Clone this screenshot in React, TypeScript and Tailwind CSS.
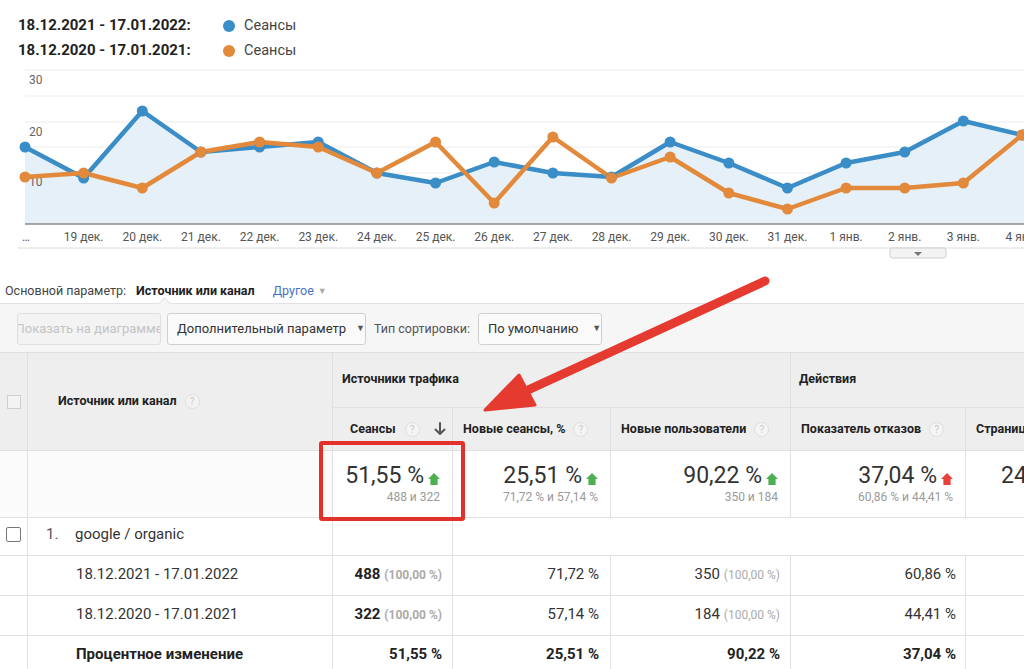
import React from "react";

const blue = [147, 178, 111, 152, 147, 142, 173, 183, 162, 173, 177, 142, 163, 188, 163, 152, 121, 135, 142];
const orange = [177, 173, 188, 152, 142, 147, 173, 142, 203, 137, 178, 157, 193, 209, 188, 188, 183, 135, 120];
const days = [
  "…", "19 дек.", "20 дек.", "21 дек.", "22 дек.", "23 дек.", "24 дек.", "25 дек.", "26 дек.",
  "27 дек.", "28 дек.", "29 дек.", "30 дек.", "31 дек.", "1 янв.", "2 янв.", "3 янв.", "4 янв.",
];

const OFF = 62;
const px = (i: number) => 25 + i * 58.65;
const toPts = (vals: number[]) => vals.map((v, i) => `${px(i)},${v - OFF}`).join(" ");

const Chart = () => {
  const grid = [70, 96, 122, 147, 173, 198];
  const area = `${toPts(blue)} ${px(blue.length - 1)},162 25,162`;
  return (
    <svg width={1024} height={200} className="block">
      {grid.map((g) => (
        <line key={g} x1={25} x2={1024} y1={g - OFF} y2={g - OFF} stroke="#ececec" strokeWidth={1} />
      ))}
      <polygon points={area} fill="#e5f0f8" />
      <line x1={25} x2={1024} y1={162} y2={162} stroke="#8a8a8a" strokeWidth={1.5} />
      <text x={29} y={22} fontSize={12} fill="#666">30</text>
      <text x={29} y={74} fontSize={12} fill="#666">20</text>
      <text x={29} y={124} fontSize={12} fill="#666">10</text>
      <polyline points={toPts(blue)} fill="none" stroke="#3a8dc6" strokeWidth={4.5} strokeLinejoin="round" />
      <polyline points={toPts(orange)} fill="none" stroke="#e2893b" strokeWidth={4.5} strokeLinejoin="round" />
      {blue.map((v, i) => (
        <circle key={"b" + i} cx={px(i)} cy={v - OFF} r={5.5} fill="#3a8dc6" />
      ))}
      {orange.map((v, i) => (
        <circle key={"o" + i} cx={px(i)} cy={v - OFF} r={5.5} fill="#e2893b" />
      ))}
      {days.map((d, i) => (
        <text key={d} x={i === 0 ? 22 : px(i)} y={179} fontSize={12} fill="#555" textAnchor={i === 0 ? "start" : "middle"}>
          {d}
        </text>
      ))}
      <line x1={18} x2={1024} y1={186} y2={186} stroke="#dcdcdc" strokeWidth={1} />
      <rect x={890} y={186} width={56} height={10} rx={2} fill="#f3f3f3" stroke="#cfcfcf" />
      <polygon points="914,190 922,190 918,194" fill="#777" />
    </svg>
  );
};

const Help = () => (
  <span className="inline-flex h-[15px] w-[15px] items-center justify-center rounded-full border border-[#dedede] bg-[#f4f4f4] text-[10px] font-normal text-[#c8c8c8]">
    ?
  </span>
);

const Up = ({ red }: { red?: boolean }) => (
  <svg width={12} height={12} viewBox="0 0 10 10" className="mb-[4px] ml-[4px]">
    <polygon points="5,0 10,5 8,5 8,10 2,10 2,5 0,5" fill={red ? "#e8413a" : "#4caf50"} />
  </svg>
);

const Summary = ({ value, sub, red }: { value: string; sub: string; red?: boolean }) => (
  <div className="flex flex-col items-end pr-[12px] pt-[12px]">
    <div className="flex items-end text-[23px] leading-[26px] text-[#333]">
      {value}
      <Up red={red} />
    </div>
    <div className="text-[12px] leading-[16px] text-[#9a9a9a]">{sub}</div>
  </div>
);

const Cell = ({ children, className = "" }: { children?: React.ReactNode; className?: string }) => (
  <div className={`flex items-center whitespace-nowrap border-b border-[#e0e0e0] ${className}`}>{children}</div>
);

const SortDown = () => (
  <svg width={12} height={14} viewBox="0 0 12 14" className="ml-[14px]">
    <path d="M6 1 V12 M1.5 7.5 L6 12 L10.5 7.5" fill="none" stroke="#555" strokeWidth={2} strokeLinecap="round" strokeLinejoin="round" />
  </svg>
);

export default function App() {
  return (
    <div className="relative h-[669px] w-[1024px] overflow-hidden bg-white font-['Roboto',sans-serif] text-[#333]">
      {/* legend */}
      <div className="h-[62px] pl-[18px] pt-[13px]">
        {[
          ["18.12.2021 - 17.01.2022:", "bg-[#3a8dc6]"],
          ["18.12.2020 - 17.01.2021:", "bg-[#e2893b]"],
        ].map(([d, c]) => (
          <div key={d} className="flex h-[25px] items-center">
            <span className="w-[205px] text-[15px] font-bold text-[#222]">{d}</span>
            <span className={`h-[12px] w-[12px] rounded-full ${c}`} />
            <span className="ml-[9px] text-[14.5px] text-[#444]">Сеансы</span>
          </div>
        ))}
      </div>

      <Chart />

      {/* primary dimension */}
      <div className="flex h-[41px] items-start whitespace-nowrap pl-[5px] pt-[21px] text-[12.5px] leading-[16px]">
        <span className="text-[#444]">Основной параметр:</span>
        <span className="ml-[10px] font-bold text-[#222]">Источник или канал</span>
        <span className="ml-[18px] text-[#4a72c4]">Другое</span>
        <span className="ml-[4px] text-[9px] text-[#aaa]">▼</span>
      </div>

      {/* toolbar */}
      <div className="relative flex h-[49px] whitespace-nowrap border-t border-[#e2e2e2] bg-[#f6f6f6] pl-[17px] pt-[9px]">
        <div className="absolute left-[160px] top-[-5px] h-[9px] w-[9px] rotate-45 border-l border-t border-[#e2e2e2] bg-[#f6f6f6]" />
        <div className="flex h-[32px] w-[144px] items-center justify-center overflow-hidden rounded-[3px] border border-[#e0e0e0] bg-[#f3f3f3] text-[13px] text-[#c4c4c4]">
          Показать на диаграмме
        </div>
        <div className="ml-[6px] flex h-[32px] w-[199px] items-center rounded-[3px] border border-[#d0d0d0] bg-[#fafafa] pl-[9px] text-[13px] text-[#333]">
          Дополнительный параметр
          <span className="ml-[10px] text-[9px] text-[#555]">▼</span>
        </div>
        <div className="ml-[8px] flex h-[32px] items-center text-[12.5px] text-[#555]">Тип сортировки:</div>
        <div className="ml-[8px] flex h-[32px] w-[124px] items-center rounded-[3px] border border-[#d0d0d0] bg-[#fafafa] pl-[9px] text-[13px] text-[#333]">
          По умолчанию
          <span className="ml-[14px] text-[9px] text-[#555]">▼</span>
        </div>
      </div>

      {/* table */}
      <div className="grid w-[1140px] grid-cols-[28px_305px_120px_158px_180px_175px_174px] grid-rows-[55px_43px_67px_38px_40px_40px_40px] border-t border-[#dedede] text-[12.5px]">
        {/* header */}
        <Cell className="row-span-2 justify-center border-r bg-[#eeeeee]">
          <span className="h-[14px] w-[14px] border border-[#cfcfcf] bg-[#f3f3f3]" />
        </Cell>
        <Cell className="row-span-2 gap-[8px] border-r bg-[#eeeeee] pl-[30px] font-bold text-[#222]">
          Источник или канал <Help />
        </Cell>
        <Cell className="col-span-3 border-r bg-[#eeeeee] pb-[2px] pl-[9px] font-bold text-[#222]">Источники трафика</Cell>
        <Cell className="col-span-2 bg-[#eeeeee] pb-[2px] pl-[8px] font-bold text-[#222]">Действия</Cell>

        <Cell className="border-r bg-[#eeeeee] pl-[17px] font-bold text-[#222]">
          Сеансы
          <span className="ml-[9px] flex">
            <Help />
          </span>
          <SortDown />
        </Cell>
        <Cell className="gap-[8px] border-r bg-[#eeeeee] pl-[10px] font-bold text-[#222]">
          Новые сеансы, % <Help />
        </Cell>
        <Cell className="gap-[8px] border-r bg-[#eeeeee] pl-[10px] font-bold text-[#222]">
          Новые пользователи <Help />
        </Cell>
        <Cell className="gap-[8px] border-r bg-[#eeeeee] pl-[10px] font-bold text-[#222]">
          Показатель отказов <Help />
        </Cell>
        <Cell className="bg-[#eeeeee] pl-[10px] font-bold text-[#222]">Страниц/сеанс</Cell>

        {/* summary */}
        <Cell className="border-r bg-[#fbfbfb]" />
        <Cell className="border-r bg-[#fbfbfb]" />
        <Cell className="items-start justify-end border-r bg-white">
          <Summary value="51,55 %" sub="488 и 322" />
        </Cell>
        <Cell className="items-start justify-end border-r bg-white">
          <Summary value="25,51 %" sub="71,72 % и 57,14 %" />
        </Cell>
        <Cell className="items-start justify-end border-r bg-white">
          <Summary value="90,22 %" sub="350 и 184" />
        </Cell>
        <Cell className="items-start justify-end border-r bg-white">
          <Summary value="37,04 %" sub="60,86 % и 44,41 %" red />
        </Cell>
        <Cell className="items-start bg-white pl-[35px] pt-[12px] text-[23px] leading-[26px]">24,18 %</Cell>

        {/* google / organic */}
        <Cell className="justify-center border-r pb-[4px]">
          <span className="h-[15px] w-[15px] rounded-[2px] border border-[#777]" />
        </Cell>
        <Cell className="border-r pb-[5px] pl-[18px] text-[15px] text-[#333]">
          <span className="w-[29px] text-[#555]">1.</span>google / organic
        </Cell>
        <Cell className="border-r" />
        <Cell className="col-span-4" />

        {/* rows */}
        {[
          ["18.12.2021 - 17.01.2022", "488", "71,72 %", "350", "60,86 %"],
          ["18.12.2020 - 17.01.2021", "322", "57,14 %", "184", "44,41 %"],
        ].map(([d, s, ns, nu, b]) => (
          <React.Fragment key={d}>
            <Cell className="border-r" />
            <Cell className="border-r pb-[3px] pl-[48px] text-[15px] text-[#333]">{d}</Cell>
            <Cell className="justify-end border-r pb-[3px] pr-[10px] text-[15px]">
              <span>
                <b className="font-bold text-[#222]">{s}</b>
                <span className="ml-[4px] text-[12px] font-bold text-[#aaa]">(100,00 %)</span>
              </span>
            </Cell>
            <Cell className="justify-end border-r pb-[3px] pr-[11px] text-[15px] text-[#333]">{ns}</Cell>
            <Cell className="justify-end border-r pb-[3px] pr-[10px] text-[15px] text-[#333]">
              <span>
                {nu}
                <span className="ml-[4px] text-[12px] text-[#aaa]">(100,00 %)</span>
              </span>
            </Cell>
            <Cell className="justify-end border-r pb-[3px] pr-[9px] text-[15px] text-[#333]">{b}</Cell>
            <Cell />
          </React.Fragment>
        ))}
        <Cell className="border-r" />
        <Cell className="border-r pb-[3px] pl-[48px] text-[15px] font-bold text-[#222]">Процентное изменение</Cell>
        <Cell className="justify-end border-r pb-[3px] pr-[10px] text-[15px] font-bold text-[#222]">51,55 %</Cell>
        <Cell className="justify-end border-r pb-[3px] pr-[11px] text-[15px] font-bold text-[#222]">25,51 %</Cell>
        <Cell className="justify-end border-r pb-[3px] pr-[10px] text-[15px] font-bold text-[#222]">90,22 %</Cell>
        <Cell className="justify-end border-r pb-[3px] pr-[9px] text-[15px] font-bold text-[#222]">37,04 %</Cell>
        <Cell />
      </div>

      {/* annotation */}
      <div className="pointer-events-none absolute left-[319px] top-[441px] h-[80px] w-[146px] rounded-[3px] border-[4px] border-[#e2302a]" />
      <svg className="pointer-events-none absolute left-0 top-0" width={1024} height={669}>
        <line x1={765} y1={281} x2={528} y2={390} stroke="#e53a2f" strokeWidth={9} strokeLinecap="round" />
        <polygon points="485,410 519,375 535,405" fill="#e53a2f" stroke="#e53a2f" strokeWidth={3} strokeLinejoin="round" />
      </svg>
    </div>
  );
}
